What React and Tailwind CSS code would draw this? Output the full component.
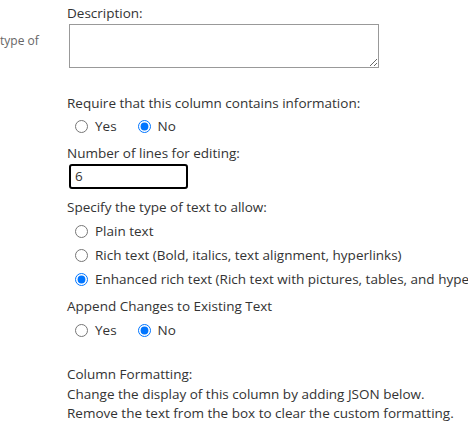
import React from 'react';

const Radio = ({ name, checked, label }) => (
    <label className="flex items-center h-[20px]">
        <input type="radio" name={name} defaultChecked={checked} className="m-0 w-[13px] h-[13px] accent-[#0075ff]" />
        <span className="ml-[7px]">{label}</span>
    </label>
);

export default function App() {
    return (
        <div className="w-[468px] h-[423px] overflow-hidden bg-white flex text-[13.5px] leading-[20px] text-[#333]" style={{ fontFamily: '"Open Sans", "Noto Sans", sans-serif' }}>
            {/* left label column */}
            <div className="w-[67px] shrink-0 pt-[31px] text-[12px] text-[#666]">type of</div>

            {/* form */}
            <div className="flex-1 min-w-0 pt-[3px]">
                <div>Description:</div>
                <textarea className="block mt-[1px] ml-[2px] w-[310px] h-[44px] border border-[#999] resize" />

                <div className="mt-[25px]">Require that this column contains information:</div>
                <div className="flex gap-[21px] mt-[3px] pl-[8px]">
                    <Radio name="req" label="Yes" />
                    <Radio name="req" label="No" checked />
                </div>

                <div className="mt-[7px]">Number of lines for editing:</div>
                <div className="mt-[1px] ml-[2px] w-[119px] h-[25px] border-2 border-black rounded-[3px] px-[4px] leading-[21px]">6</div>

                <div className="mt-[8px]">Specify the type of text to allow:</div>
                <div className="flex flex-col gap-[4px] mt-[4px] pl-[8px] whitespace-nowrap">
                    <Radio name="type" label="Plain text" />
                    <Radio name="type" label="Rich text (Bold, italics, text alignment, hyperlinks)" />
                    <Radio name="type" label="Enhanced rich text (Rich text with pictures, tables, and hyperlinks)" checked />
                </div>

                <div className="mt-[7px]">Append Changes to Existing Text</div>
                <div className="flex gap-[21px] mt-[4px] pl-[8px]">
                    <Radio name="app" label="Yes" />
                    <Radio name="app" label="No" checked />
                </div>

                <div className="mt-[25px] leading-[19.5px] whitespace-nowrap">
                    <div>Column Formatting:</div>
                    <div>Change the display of this column by adding JSON below.</div>
                    <div>Remove the text from the box to clear the custom formatting.</div>
                    <div className="text-[#038387]">Learn more about formatting columns with JSON</div>
                </div>
            </div>
        </div>
    );
}
